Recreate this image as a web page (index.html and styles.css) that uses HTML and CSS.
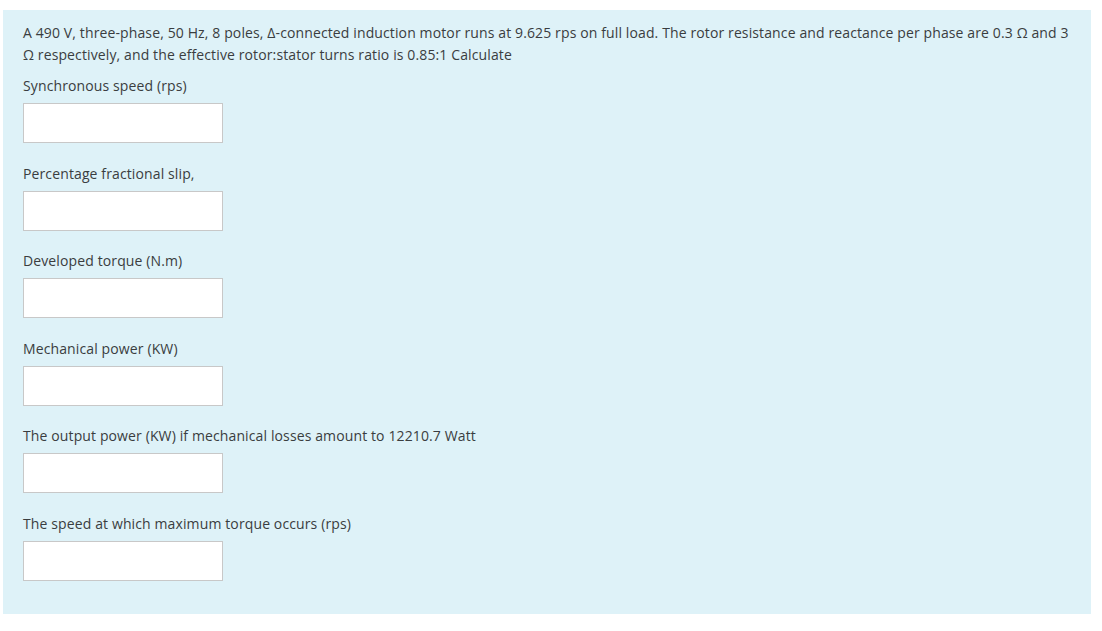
FILE: index.html
```html
<!DOCTYPE html>
<html>
<head>
<meta charset="utf-8">
<link rel="stylesheet" href="styles.css">
</head>
<body>
<div class="panel">
  <p class="question">A 490 V, three-phase, 50 Hz, 8 poles, Δ-connected induction motor runs at 9.625 rps on full load. The rotor resistance and reactance per phase are 0.3 Ω and 3 Ω respectively, and the effective rotor:stator turns ratio is 0.85:1 Calculate</p>
  <div class="field">
    <label class="label">Synchronous speed (rps)</label>
    <input class="box" type="text">
  </div>
  <div class="field">
    <label class="label">Percentage fractional slip,</label>
    <input class="box" type="text">
  </div>
  <div class="field">
    <label class="label">Developed torque (N.m)</label>
    <input class="box" type="text">
  </div>
  <div class="field">
    <label class="label">Mechanical power (KW)</label>
    <input class="box" type="text">
  </div>
  <div class="field">
    <label class="label">The output power (KW) if mechanical losses amount to 12210.7 Watt</label>
    <input class="box" type="text">
  </div>
  <div class="field">
    <label class="label">The speed at which maximum torque occurs (rps)</label>
    <input class="box" type="text">
  </div>
</div>
</body>
</html>
```
FILE: styles.css
```css
html, body {
  margin: 0;
  padding: 0;
  background: #ffffff;
}
body {
  font-family: "Open Sans", "Noto Sans", sans-serif;
  font-size: 14px;
  letter-spacing: 0.12px;
  color: #3a3d40;
}
.panel {
  margin: 10px 11px 0 3px;
  padding: 12px 16px 33px 20px;
  background: #def2f8;
  display: flex;
  flex-direction: column;
}
.question {
  margin: 0 0 9px 0;
  line-height: 22px;
}
.field {
  display: flex;
  flex-direction: column;
  align-items: flex-start;
  margin-bottom: 19.6px;
}
.field:last-child {
  margin-bottom: 0;
}
.label {
  line-height: 22px;
  margin-bottom: 6px;
}
.box {
  box-sizing: border-box;
  width: 200px;
  height: 40px;
  margin: 0;
  border: 1px solid #c8c8c8;
  background: #ffffff;
  padding: 0 8px;
  font-family: inherit;
  font-size: 14px;
}
```
